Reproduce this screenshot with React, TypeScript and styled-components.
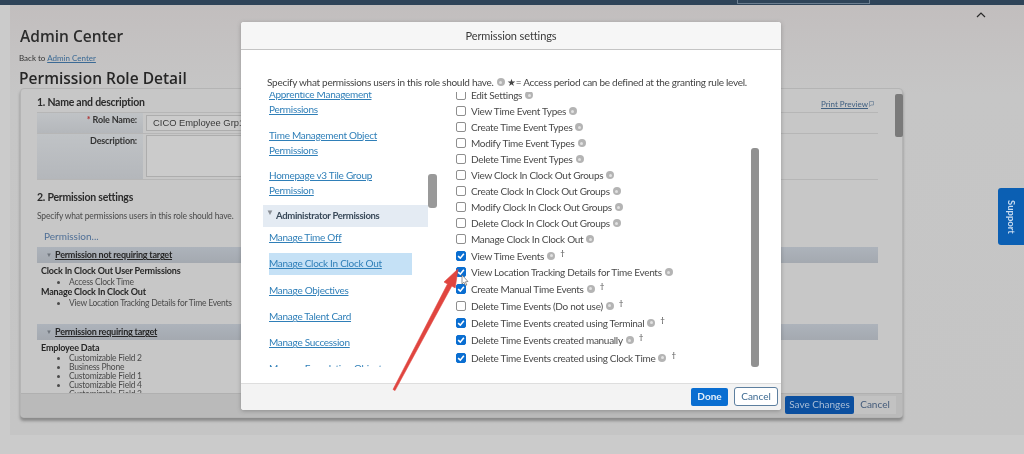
import React from "react";
import styled, { createGlobalStyle } from "styled-components";

const Global = createGlobalStyle`
  html, body { margin: 0; padding: 0; background: #c4c4c4; }
  #root { width: 1024px; height: 454px; overflow: hidden; position: relative; filter: blur(0.35px); }
  * { box-sizing: border-box; }
`;
const ui = `Lato, "Open Sans", sans-serif`;

const Page = styled.div`
  width: 1024px; height: 454px; position: relative; overflow: hidden;
  background: #cbcbcb;
  font-family: ${ui}; color: #333;
`;
const TopBar = styled.header`
  height: 5px; background: #2f4459; display: flex; justify-content: flex-end; padding-right: 154px;
`;
const TopSearch = styled.div`
  width: 133px; height: 4px; border: 1px solid #6d7f91; border-top: 0;
`;
const Content = styled.main`
  margin-left: 10px; height: 430px; padding: 20px 121px 0 10px;
  background: linear-gradient(180deg, #c2bebe 0, #c6c6c6 90px, #c5c5c5 100%);
`;
const Title = styled.h1`
  margin: 0; font: 600 15.5px/21px "Open Sans", sans-serif; color: #2c2c2c; padding-top: 1px;
`;
const BackLine = styled.div`
  font: 8px/12px ${ui}; margin-top: 5px; margin-left: -1px; color: #333;
`;
const BackLink = styled.a`
  color: #3b6a95; text-decoration: underline;
`;
const SubTitle = styled.h2`
  margin: 5px 0 0 -1px; font: 600 15.5px/19px "Open Sans", sans-serif; color: #262626;
`;
const Panel = styled.section`
  height: 330px; position: relative; border: 1px solid #b4b4b4; border-radius: 4px;
  box-shadow: 0 3px 3px #8a8a8a; background: #c7c7c7; display: flex; flex-direction: column;
`;
const PanelBody = styled.div`
  flex: 1; min-height: 0; overflow: hidden; padding: 6px 24px 0 16px; position: relative;
`;
const SectionHead = styled.div`
  font: 700 10.5px/14px ${ui}; letter-spacing: -0.25px; color: #2b2b2b; display: flex; justify-content: space-between; height: 17px;
`;
const PrintLink = styled.a`
  font: 400 8px/14px ${ui}; letter-spacing: 0; color: #3f5f80; text-decoration: underline; margin-right: 4px; display: flex; align-items: center; gap: 1px;
`;
const FormRow = styled.div<{ $h: number; $last?: boolean }>`
  display: flex; height: ${p => p.$h}px; border-top: 1px solid #b6b6b6;
  ${p => (p.$last ? "border-bottom: 1px solid #b6b6b6;" : "")}
`;
const FormLabel = styled.div`
  width: 106px; padding: 1px 6px 0 0; text-align: right; font: 700 9px/12px ${ui}; letter-spacing: -0.15px; color: #333;
  background: linear-gradient(180deg, #c0c3c6, #b4b7bb); height: 100%;
`;
const Req = styled.span`
  color: #b03030;
`;
const InputBox = styled.div`
  margin: 2px 0 0 3px; width: 300px; height: 16px; border: 1px solid #adadad; background: #cbcbcb; padding-left: 6px;
  font: 400 9.4px/14px "Liberation Sans", Arial, sans-serif; color: #383838;
`;
const TextBox = styled(InputBox)`
  height: 42px; margin-top: 1px;
`;
const SectionTwo = styled(SectionHead)`
  margin-top: 10px; height: 16px;
`;
const Hint = styled.div`
  font: 400 8.5px/13px ${ui}; letter-spacing: -0.16px; color: #4a4a4a; margin-top: 4px;
`;
const PermissionLink = styled.div`
  font: 400 10px/14px ${ui}; color: #4f6f96; margin: 6px 0 4px 7px;
`;
const GroupBar = styled.div`
  height: 16px; background: linear-gradient(180deg, #adb3bb, #a4a9b0); padding-left: 18px; position: relative;
  font: 700 9px/16px ${ui}; letter-spacing: -0.22px; color: #262626; text-decoration: underline;
  &::before { content: "▼"; position: absolute; left: 9px; top: 0; font-size: 6px; color: #70767e; text-decoration: none; }
`;
const PermGroup = styled.div`
  padding: 3px 0 0 4px; height: 61px;
`;
const PermTitle = styled.div`
  font: 700 9px/10.5px ${ui}; letter-spacing: -0.17px; color: #262626;
`;
const Bullets = styled.ul`
  margin: 0; padding: 0 0 0 28px; list-style: disc; font: 400 8.5px/9.2px ${ui}; letter-spacing: -0.24px; color: #4a4a4a;
`;
const BulletWide = styled(Bullets)`
  line-height: 10.5px;
`;
const PanelFoot = styled.footer`
  height: 24px; flex: none; background: #bababa; border-top: 1px solid #b0b0b0; display: flex; justify-content: flex-end;
  align-items: flex-start; padding: 2px 6px 0 0; border-radius: 0 0 4px 4px;
`;
const SaveBtn = styled.div`
  width: 69px; height: 18px; background: #0b4f9f; border-radius: 2px; color: #a9bdd6; text-align: center;
  font: 400 10px/17px ${ui};
`;
const GhostBtn = styled.div`
  width: 42px; height: 18px; background: #c2c2c2; color: #445b7a; text-align: center; font: 400 10px/17px ${ui};
`;
const PanelThumb = styled.div`
  position: absolute; right: -1px; top: 5px; width: 8px; height: 43px; border-radius: 2px; background: #7a7a7a;
`;
const Chevron = styled.svg`
  position: absolute; left: 975px; top: 11px;
`;
const SupportTab = styled.div`
  position: absolute; left: 998px; top: 188px; width: 26px; height: 57px; background: #0b5fb3; border-radius: 3px 0 0 3px;
  color: #c9dcf0; font: 700 9.5px/26px ${ui}; writing-mode: vertical-rl; text-align: center;
`;

const Modal = styled.div`
  position: absolute; left: 241px; top: 22px; width: 540px; height: 388px; background: #fff; border-radius: 3px;
  box-shadow: 0 1px 4px rgba(60,60,60,.35); display: flex; flex-direction: column; z-index: 2;
`;
const ModalHead = styled.div`
  height: 28px; flex: none; background: #f6f6f6; border-bottom: 1px solid #c4c4c4; text-align: center; border-radius: 3px 3px 0 0;
  font: 400 11px/27px ${ui}; letter-spacing: -0.1px; color: #3a3a3a;
`;
const ModalBody = styled.div`
  flex: 1; min-height: 0; position: relative; padding: 25px 0 0 26px; display: flex; flex-direction: column;
`;
const Intro = styled.div`
  font: 400 10px/14px ${ui}; letter-spacing: -0.27px; color: #444; display: flex; align-items: center; white-space: pre; height: 14px; flex: none;
`;
const Columns = styled.div`
  display: flex; margin: 3px 0 0 -4px; height: 275px;
`;
const LeftPane = styled.div`
  width: 165px; height: 275px; overflow: hidden; flex: none; margin-right: 28px; position: relative;
`;
const LeftInner = styled.div`
  margin-top: -5px;
`;
const NavItem = styled.div<{ $active?: boolean }>`
  margin: 0 16px 10px 6px; padding: 0; width: 143px;
  background: ${p => (p.$active ? "#c5e1f6" : "transparent")};
  font: 400 10px/15px ${ui}; letter-spacing: -0.28px;
`;
const NavLink = styled.a`
  color: #2f7fb8; text-decoration: underline;
`;
const FirstItem = styled(NavItem)`
  margin-bottom: 10.5px;
`;
const SingleItem = styled(NavItem)`
  margin-bottom: 11px;
`;
const BeforeActiveItem = styled(NavItem)`
  margin-bottom: 8px;
`;
const ActiveItem = styled(NavItem)`
  height: 22px; line-height: 21px; margin-bottom: 8px;
`;
const NavHeader = styled.div`
  height: 22px; background: #e4ebf3; font: 700 9.5px/21px ${ui}; letter-spacing: -0.3px; color: #3a4a5a; padding-left: 13px; margin: -2.5px 0 3px; position: relative;
  &::before { content: "▼"; position: absolute; left: 3px; top: -3px; font-size: 8px; color: #8a8f96; }
`;
const RightPane = styled.div`
  flex: 1; height: 275px; overflow: hidden; position: relative;
`;
const Row = styled.div<{ $h: number }>`
  height: ${p => p.$h}px; display: flex; align-items: center;
  font: 400 10px/14px ${ui}; letter-spacing: -0.3px; color: #4a4a4a; white-space: nowrap;
`;
const FirstRows = styled.div`
  margin-top: -5px;
`;
const Box = styled.span<{ $on?: boolean }>`
  width: 10px; height: 10px; flex: none; border-radius: 2px; margin-right: 5px; display: inline-flex; align-items: center; justify-content: center;
  border: 1px solid ${p => (p.$on ? "#0a6ed1" : "#8e8e8e")};
  background: ${p => (p.$on ? "#0a6ed1" : "#fff")};
`;
const Help = styled.span`
  width: 8px; height: 8px; border-radius: 50%; background: #b4b4b4; display: inline-block; margin-left: 3px; flex: none; position: relative;
  &::after { content: ""; position: absolute; left: 2.5px; top: 2.5px; width: 3px; height: 3px; border-radius: 50%; background: #e2e2e2; }
`;
const Dagger = styled.span`
  font: 400 8px/8px ${ui}; margin: -6px 0 0 5px; color: #444;
`;
const LeftThumb = styled.div`
  position: absolute; left: 187px; top: 124px; width: 9px; height: 34px; border-radius: 3px; background: #999;
`;
const RightThumb = styled.div`
  position: absolute; left: 510px; top: 98px; width: 8px; height: 219px; border-radius: 3px; background: #919191;
`;
const ModalFoot = styled.div`
  height: 27px; flex: none; background: #f3f3f3; border-top: 1px solid #dedede; border-radius: 0 0 3px 3px;
  display: flex; justify-content: flex-end; align-items: flex-start; gap: 6px; padding: 4px 3px 0 0;
`;
const DoneBtn = styled.div`
  width: 37px; height: 18px; background: #0a6ed1; border-radius: 2px; color: #e6f0fa; text-align: center; font: 700 10px/17px ${ui};
`;
const CancelBtn = styled.div`
  width: 44px; height: 19px; margin-top: -1px; background: #fff; border: 1px solid #5d7f9f; border-radius: 3px; color: #3d6a92; text-align: center; font: 400 10px/17px ${ui};
`;
const Arrow = styled.svg`
  position: absolute; left: 385px; top: 262px; z-index: 3;
`;

const Check = () => (
  <svg width="8" height="8" viewBox="0 0 7 7"><path d="M1 3.6 L2.9 5.4 L6 1.5" fill="none" stroke="#fff" strokeWidth="1.4" /></svg>
);

const rows: { t: string; on?: boolean; d?: boolean; h?: number }[] = [
  { t: "Edit Settings" },
  { t: "View Time Event Types" },
  { t: "Create Time Event Types" },
  { t: "Modify Time Event Types" },
  { t: "Delete Time Event Types" },
  { t: "View Clock In Clock Out Groups" },
  { t: "Create Clock In Clock Out Groups" },
  { t: "Modify Clock In Clock Out Groups" },
  { t: "Delete Clock In Clock Out Groups" },
  { t: "Manage Clock In Clock Out" },
  { t: "View Time Events", on: true, d: true, h: 17.5 },
  { t: "View Location Tracking Details for Time Events", on: true, h: 15.5 },
  { t: "Create Manual Time Events", on: true, d: true, h: 17 },
  { t: "Delete Time Events (Do not use)", d: true, h: 17 },
  { t: "Delete Time Events created using Terminal", on: true, d: true, h: 17.5 },
  { t: "Delete Time Events created manually", on: true, d: true, h: 17.5 },
  { t: "Delete Time Events created using Clock Time", on: true, d: true, h: 17 },
];

export default function App() {
  return (
    <Page>
      <Global />
      <TopBar><TopSearch /></TopBar>
      <Content>
        <Title>Admin Center</Title>
        <BackLine>Back to <BackLink>Admin Center</BackLink></BackLine>
        <SubTitle>Permission Role Detail</SubTitle>
        <Panel>
          <PanelBody>
            <SectionHead>
              1. Name and description
              <PrintLink>
                Print Preview
                <svg width="5" height="6" viewBox="0 0 5 6"><path d="M.5.5h4v3.5H2L.5 5.5z" fill="none" stroke="#6a7f96" strokeWidth=".7" /></svg>
              </PrintLink>
            </SectionHead>
            <FormRow $h={21}>
              <FormLabel><Req>* </Req>Role Name:</FormLabel>
              <InputBox>CICO Employee Grp1</InputBox>
            </FormRow>
            <FormRow $h={47} $last>
              <FormLabel>Description:</FormLabel>
              <TextBox />
            </FormRow>
            <SectionTwo>2. Permission settings</SectionTwo>
            <Hint>Specify what permissions users in this role should have.</Hint>
            <PermissionLink>Permission...</PermissionLink>
            <GroupBar>Permission not requiring target</GroupBar>
            <PermGroup>
              <PermTitle>Clock In Clock Out User Permissions</PermTitle>
              <BulletWide><li>Access Clock Time</li></BulletWide>
              <PermTitle>Manage Clock In Clock Out</PermTitle>
              <BulletWide><li>View Location Tracking Details for Time Events</li></BulletWide>
            </PermGroup>
            <GroupBar>Permission requiring target</GroupBar>
            <PermGroup>
              <PermTitle>Employee Data</PermTitle>
              <Bullets>
                <li>Customizable Field 2</li>
                <li>Business Phone</li>
                <li>Customizable Field 1</li>
                <li>Customizable Field 4</li>
                <li>Customizable Field 3</li>
              </Bullets>
            </PermGroup>
          </PanelBody>
          <PanelFoot><SaveBtn>Save Changes</SaveBtn><GhostBtn>Cancel</GhostBtn></PanelFoot>
          <PanelThumb />
        </Panel>
      </Content>
      <Chevron width="12" height="8" viewBox="0 0 12 8"><path d="M2 6 L6 2 L10 6" fill="none" stroke="#2a2a2a" strokeWidth="1.2" /></Chevron>
      <SupportTab>Support</SupportTab>

      <Modal>
        <ModalHead>Permission settings</ModalHead>
        <ModalBody>
          <Intro>Specify what permissions users in this role should have.<Help /> ★= Access period can be defined at the granting rule level.</Intro>
          <Columns>
            <LeftPane>
              <LeftInner>
                <FirstItem><NavLink>Apprentice Management Permissions</NavLink></FirstItem>
                <NavItem><NavLink>Time Management Object Permissions</NavLink></NavItem>
                <NavItem><NavLink>Homepage v3 Tile Group Permission</NavLink></NavItem>
                <NavHeader>Administrator Permissions</NavHeader>
                <BeforeActiveItem><NavLink>Manage Time Off</NavLink></BeforeActiveItem>
                <ActiveItem $active><NavLink>Manage Clock In Clock Out</NavLink></ActiveItem>
                <SingleItem><NavLink>Manage Objectives</NavLink></SingleItem>
                <SingleItem><NavLink>Manage Talent Card</NavLink></SingleItem>
                <SingleItem><NavLink>Manage Succession</NavLink></SingleItem>
                <SingleItem><NavLink>Manage Foundation Objects</NavLink></SingleItem>
              </LeftInner>
            </LeftPane>
            <RightPane>
              <FirstRows>
                {rows.map(r => (
                  <Row key={r.t} $h={r.h ?? 16}>
                    <Box $on={r.on}>{r.on && <Check />}</Box>
                    {r.t}
                    <Help />
                    {r.d && <Dagger>†</Dagger>}
                  </Row>
                ))}
              </FirstRows>
            </RightPane>
          </Columns>
          <LeftThumb />
          <RightThumb />
        </ModalBody>
        <ModalFoot><DoneBtn>Done</DoneBtn><CancelBtn>Cancel</CancelBtn></ModalFoot>
      </Modal>

      <Arrow width="90" height="135" viewBox="0 0 90 135">
        <path d="M8 127.4 L62.5 22 L59 20 L73 7 L70.2 25.9 L66.8 24 L10 128.6 Z" fill="#e0453f" strokeLinejoin="round" stroke="#e0453f" strokeWidth=".6" />
        <path d="M77 13 L77 22 L79 20.2 L80.5 23.5 L81.8 23 L80.4 19.8 L83 19.5 Z" fill="#fff" stroke="#666" strokeWidth=".7" />
      </Arrow>
    </Page>
  );
}
